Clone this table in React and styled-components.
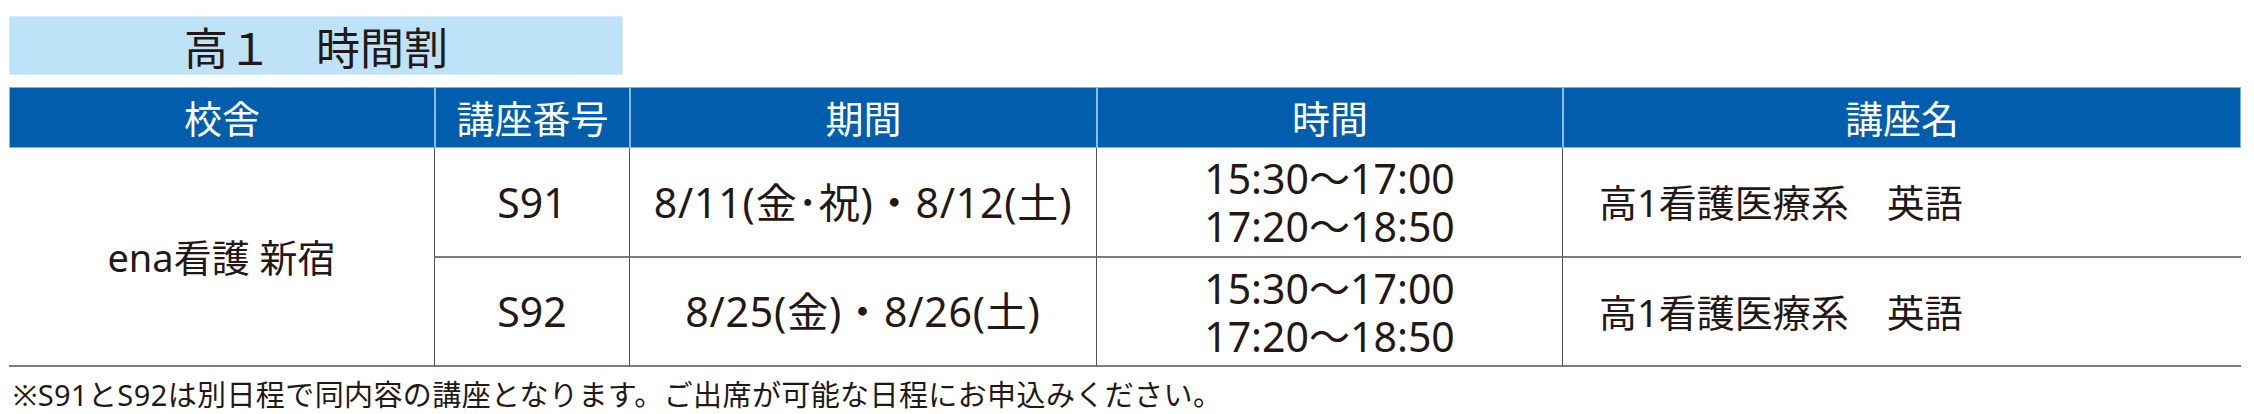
import React from "react";
import styled, { createGlobalStyle } from "styled-components";

const GlobalStyle = createGlobalStyle`
  html, body {
    margin: 0;
    padding: 0;
    background: #ffffff;
  }
  body {
    font-family: "Noto Sans", "Noto Sans CJK JP", sans-serif;
    color: #231815;
  }
`;

const Page = styled.div`
  padding: 16px 0 0 9px;
  width: 2232px;
`;

const TitleBar = styled.h1`
  margin: 0;
  width: 614px;
  height: 59px;
  box-sizing: border-box;
  background: #bee3f8;
  border: 1px solid #d3ecfa;
  display: flex;
  align-items: center;
  justify-content: center;
  font-family: "Noto Sans CJK JP", sans-serif;
  font-weight: 400;
  font-size: 44px;
  line-height: 1;
  color: #231815;
`;

const Table = styled.div`
  margin-top: 12px;
  display: grid;
  grid-template-columns: 425px 195px 467px 466px 679px;
  grid-template-rows: 61px 110px 109px;
`;

const HeadCell = styled.div`
  box-sizing: border-box;
  background: #005ead;
  color: #ffffff;
  border-top: 1px solid #7fb0de;
  border-bottom: 1px solid #7fb0de;
  border-left: ${(p) => (p.$first ? "1px" : "2px")} solid #8dbbe5;
  border-right: ${(p) => (p.$last ? "1px solid #7fb0de" : "none")};
  display: flex;
  align-items: center;
  justify-content: center;
  font-family: "Noto Sans CJK JP", sans-serif;
  font-size: 38px;
  line-height: 1;
  padding-bottom: 2px;
`;

const Cell = styled.div`
  box-sizing: border-box;
  display: flex;
  flex-direction: column;
  align-items: ${(p) => (p.$left ? "flex-start" : "center")};
  justify-content: center;
  padding-left: ${(p) => (p.$left ? "36px" : "0")};
  border-left: ${(p) => (p.$divider ? "1px solid #555353" : "none")};
  border-bottom: 2px solid #7d7b7b;
  grid-row: ${(p) => (p.$span ? "span 2" : "auto")};
  font-size: ${(p) => p.$size || 41}px;
  letter-spacing: ${(p) => p.$spacing || 0}px;
  line-height: 1;
  color: #231815;
  white-space: nowrap;
`;

const TimeLine = styled.span`
  display: block;
  height: 48px;
  line-height: 48px;
`;

const Footnote = styled.p`
  margin: 13px 0 0 4px;
  font-size: 29px;
  line-height: 29px;
  letter-spacing: 0.4px;
  color: #231815;
  white-space: nowrap;
`;

const heads = ["校舎", "講座番号", "期間", "時間", "講座名"];

const rows = [
  {
    code: "S91",
    period: "8/11(金･祝)・8/12(土)",
    times: ["15:30〜17:00", "17:20〜18:50"],
    course: "高1看護医療系　英語",
  },
  {
    code: "S92",
    period: "8/25(金)・8/26(土)",
    times: ["15:30〜17:00", "17:20〜18:50"],
    course: "高1看護医療系　英語",
  },
];

export default function App() {
  return (
    <>
      <GlobalStyle />
      <Page>
        <TitleBar>高１　時間割</TitleBar>
        <Table>
          {heads.map((h, i) => (
            <HeadCell key={h} $first={i === 0} $last={i === heads.length - 1}>
              {h}
            </HeadCell>
          ))}
          <Cell $span $size={38}>
            ena看護 新宿
          </Cell>
          {rows.map((r) => (
            <React.Fragment key={r.code}>
              <Cell $divider>{r.code}</Cell>
              <Cell $divider $spacing={0.8}>{r.period}</Cell>
              <Cell $divider>
                {r.times.map((t) => (
                  <TimeLine key={t}>{t}</TimeLine>
                ))}
              </Cell>
              <Cell $divider $left $size={38}>
                {r.course}
              </Cell>
            </React.Fragment>
          ))}
        </Table>
        <Footnote>
          ※S91とS92は別日程で同内容の講座となります。ご出席が可能な日程にお申込みください。
        </Footnote>
      </Page>
    </>
  );
}
